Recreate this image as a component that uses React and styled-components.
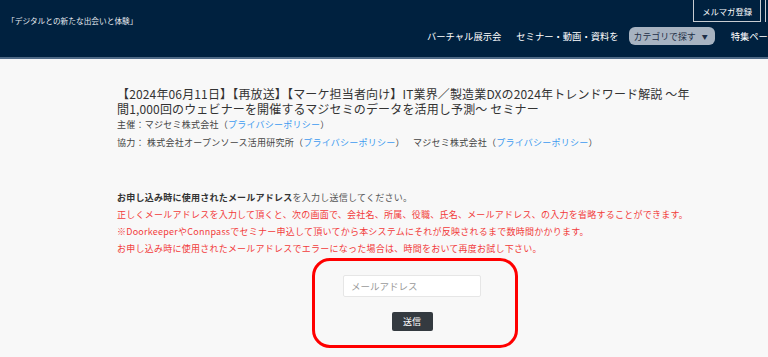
import styled, { createGlobalStyle } from "styled-components";

const GlobalStyle = createGlobalStyle`
  body {
    margin: 0;
    background: #f8f8f8;
    font-family: "Noto Sans CJK JP", "Noto Sans", sans-serif;
    color: #333;
  }
`;

export default function App() {
  return (
    <>
      <GlobalStyle />
      <Header>
        <Tagline>「デジタルとの新たな出会いと体験」</Tagline>
        <RightCol>
          <TopRow>
            <MailButton>メルマガ登録</MailButton>
            <EdgeBox />
          </TopRow>
          <NavRow>
            <NavItem>バーチャル展示会</NavItem>
            <NavItem>セミナー・動画・資料を</NavItem>
            <CategoryPill>
              カテゴリで探す <Caret>▼</Caret>
            </CategoryPill>
            <NavItem>特集ページ</NavItem>
          </NavRow>
        </RightCol>
      </Header>
      <Main>
        <Title>
          【2024年06月11日】【再放送】【マーケ担当者向け】IT業界／製造業DXの2024年トレンドワード解説 〜年
          <br />
          間1,000回のウェビナーを開催するマジセミのデータを活用し予測〜 セミナー
        </Title>
        <SponsorLine>
          主催：マジセミ株式会社（<Link>プライバシーポリシー</Link>）
        </SponsorLine>
        <SponsorLine>
          協力： 株式会社オープンソース活用研究所（<Link>プライバシーポリシー</Link>）
          <Partner>
            マジセミ株式会社（<Link>プライバシーポリシー</Link>）
          </Partner>
        </SponsorLine>
        <Notice>
          <NoticeLine>
            <strong>お申し込み時に使用されたメールアドレス</strong>
            を入力し送信してください。
          </NoticeLine>
          <NoticeLine $warn>
            正しくメールアドレスを入力して頂くと、次の画面で、会社名、所属、役職、氏名、メールアドレス、の入力を省略することができます。
          </NoticeLine>
          <NoticeLine $warn>
            ※DoorkeeperやConnpassでセミナー申込して頂いてから本システムにそれが反映されるまで数時間かかります。
          </NoticeLine>
          <NoticeLine $warn>
            お申し込み時に使用されたメールアドレスでエラーになった場合は、時間をおいて再度お試し下さい。
          </NoticeLine>
        </Notice>
        <EmailForm onSubmit={(e) => e.preventDefault()}>
          <EmailInput type="email" placeholder="メールアドレス" />
          <SubmitButton type="submit">送信</SubmitButton>
        </EmailForm>
      </Main>
    </>
  );
}

const Header = styled.header`
  display: flex;
  height: 57px;
  background: #00213f;
  border-bottom: 2px solid #4f6a86;
  overflow: hidden;
  white-space: nowrap;
`;

const Tagline = styled.div`
  flex: 0 0 419px;
  padding: 14px 0 0 7px;
  font-size: 7.7px;
  line-height: 14px;
  color: #e6ebf0;
`;

const RightCol = styled.div`
  flex: 1;
  min-width: 0;
  display: flex;
  flex-direction: column;
`;

const TopRow = styled.div`
  display: flex;
  justify-content: flex-end;
  height: 22px;
`;

const MailButton = styled.a`
  display: flex;
  align-items: center;
  padding: 0 8px;
  margin-top: -1px;
  border: 1px solid #c7ccd2;
  font-size: 8.3px;
  color: #fff;
  cursor: pointer;
`;

const EdgeBox = styled.div`
  width: 2px;
  margin-left: 4px;
  border-left: 1px solid #c7ccd2;
`;

const NavRow = styled.nav`
  display: flex;
  align-items: center;
  height: 18px;
  margin-top: 5px;
  padding-left: 1px;
  font-size: 9.3px;
  color: #fff;
`;

const NavItem = styled.span`
  margin-right: 15px;
`;

const CategoryPill = styled.span`
  display: flex;
  align-items: center;
  gap: 6px;
  height: 18px;
  padding: 0 7px 0 5px;
  margin: 0 16px 0 -5px;
  border-radius: 6px;
  background: #a7b3c1;
  color: #1d2f46;
  font-size: 8.9px;
`;

const Caret = styled.span`
  font-size: 6px;
`;

const Main = styled.main`
  width: 596px;
  margin-left: 117px;
  padding-top: 27px;
`;

const Title = styled.h1`
  width: 600px;
  margin: 0;
  font-size: 12px;
  font-weight: normal;
  line-height: 15px;
  letter-spacing: 0.15px;
  color: #333;
`;

const SponsorLine = styled.div`
  font-size: 9px;
  line-height: 18px;
  letter-spacing: 0.25px;
  color: #444;
`;

const Link = styled.a`
  color: #3d9bf0;
`;

const Partner = styled.span`
  margin-left: 8px;
`;

const Notice = styled.div`
  margin-top: 37px;
`;

const NoticeLine = styled.p`
  margin: 0;
  font-size: 9px;
  line-height: 17px;
  letter-spacing: 0.24px;
  color: ${(p) => (p.$warn ? "#f23b3b" : "#555")};

  strong {
    color: #333;
  }
`;

const EmailForm = styled.form`
  display: flex;
  flex-direction: column;
  align-items: center;
  gap: 15px;
  width: 194px;
  margin: 1px auto 0;
  padding: 14px 6px 14px 0;
  border: 3px solid #ff0000;
  border-radius: 18px;
`;

const EmailInput = styled.input`
  box-sizing: border-box;
  width: 138px;
  height: 22px;
  padding: 0 7px;
  border: 1px solid #e6e6e6;
  border-radius: 2px;
  background: #fff;
  font-family: inherit;
  font-size: 9.5px;

  &::placeholder {
    color: #9a9a9a;
  }
`;

const SubmitButton = styled.button`
  width: 41px;
  height: 19px;
  padding: 0;
  border: none;
  border-radius: 2px;
  background: #343a40;
  color: #fff;
  font-family: inherit;
  font-size: 9px;
`;
